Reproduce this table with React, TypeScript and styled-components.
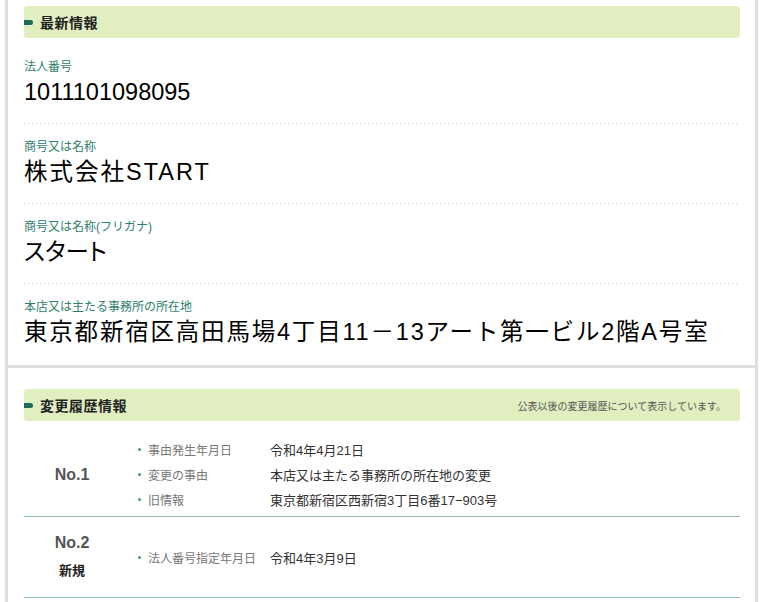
import React from "react";
import styled, { createGlobalStyle } from "styled-components";

const Global = createGlobalStyle`
  *, *::before, *::after { box-sizing: border-box; }
  html, body { margin: 0; padding: 0; background: #fff; }
  body {
    font-family: "Liberation Sans", "Noto Sans CJK JP", sans-serif;
    color: #222;
  }
`;

const Frame = styled.div`
  margin-left: 5px;
  width: 753px;
  min-height: 602px;
  background: #dedede;
  padding: 0 3px;
  display: flex;
  flex-direction: column;
  gap: 3px;
`;

const Panel = styled.section<{ $top: number; $grow?: boolean }>`
  background: #fff;
  padding: ${(p) => p.$top}px 15px 1px 16px;
  flex: ${(p) => (p.$grow ? "1 1 auto" : "none")};
`;

const SectionHeader = styled.div`
  height: 32px;
  background: #e1eebf;
  border-radius: 3px;
  display: flex;
  align-items: center;
  padding: 0 14px 0 0;
`;

const Marker = styled.span`
  width: 9px;
  height: 5px;
  border-radius: 0 3px 3px 0;
  background: #1e6a5a;
  margin-right: 7px;
`;

const HeaderTitle = styled.h2`
  margin: 0;
  font-size: 14px;
  font-weight: bold;
  letter-spacing: 0.5px;
  color: #222;
`;

const HeaderNote = styled.span`
  margin-left: auto;
  font-size: 10px;
  color: #555;
`;

const InfoList = styled.div`
  margin-top: 6px;
`;

const InfoRow = styled.div`
  padding: 15px 0 16px;
  &:not(:last-child) {
    background-image: linear-gradient(to right, #c6c6c6 1px, transparent 1px);
    background-size: 4px 1px;
    background-repeat: repeat-x;
    background-position: left bottom;
  }
`;

const InfoLabel = styled.div`
  font-size: 12px;
  line-height: 16px;
  color: #2f7e6c;
`;

const InfoValue = styled.div<{ $spacing?: number; $palt?: boolean }>`
  margin-top: 2px;
  font-size: 23.5px;
  line-height: 31px;
  color: #000;
  letter-spacing: ${(p) => p.$spacing ?? 0}px;
  font-feature-settings: ${(p) => (p.$palt ? '"palt"' : "normal")};
  white-space: nowrap;
`;

const HistoryList = styled.div`
  margin-top: 12px;
`;

const HistoryRow = styled.div`
  display: grid;
  grid-template-columns: 96px 1fr;
  align-items: center;
  min-height: 81px;
  padding: 4px 0;
  border-bottom: 1px solid #8fc2b0;
`;

const NoCell = styled.div`
  display: flex;
  flex-direction: column;
  align-items: center;
`;

const NoText = styled.div`
  font-size: 16px;
  font-weight: bold;
  line-height: 22px;
  color: #555;
`;

const Kind = styled.div`
  font-size: 13px;
  font-weight: bold;
  line-height: 22px;
  margin-top: 6px;
  color: #222;
`;

const Items = styled.ul`
  list-style: none;
  margin: 0;
  padding: 0 0 0 18px;
`;

const Item = styled.li`
  display: flex;
  align-items: center;
  height: 25px;
`;

const Bullet = styled.span`
  width: 3px;
  height: 3px;
  border-radius: 50%;
  background: #3f9c84;
  margin-right: 7px;
  flex: none;
`;

const ItemLabel = styled.span`
  width: 122px;
  flex: none;
  font-size: 12px;
  color: #777;
`;

const ItemValue = styled.span`
  font-size: 13px;
  color: #333;
`;

const info = [
  { label: "法人番号", value: "1011101098095", spacing: 0, palt: false },
  { label: "商号又は名称", value: "株式会社START", spacing: 2, palt: false },
  { label: "商号又は名称(フリガナ)", value: "スタート", spacing: 0, palt: true },
  {
    label: "本店又は主たる事務所の所在地",
    value: "東京都新宿区高田馬場4丁目11－13アート第一ビル2階A号室",
    spacing: 1.8,
    palt: false,
  },
];

const history = [
  {
    no: "No.1",
    kind: "",
    items: [
      ["事由発生年月日", "令和4年4月21日"],
      ["変更の事由", "本店又は主たる事務所の所在地の変更"],
      ["旧情報", "東京都新宿区西新宿3丁目6番17−903号"],
    ],
  },
  {
    no: "No.2",
    kind: "新規",
    items: [["法人番号指定年月日", "令和4年3月9日"]],
  },
];

export default function App() {
  return (
    <>
      <Global />
      <Frame>
        <Panel $top={6}>
          <SectionHeader>
            <Marker />
            <HeaderTitle>最新情報</HeaderTitle>
          </SectionHeader>
          <InfoList>
            {info.map((r) => (
              <InfoRow key={r.label}>
                <InfoLabel>{r.label}</InfoLabel>
                <InfoValue $spacing={r.spacing} $palt={r.palt}>
                  {r.value}
                </InfoValue>
              </InfoRow>
            ))}
          </InfoList>
        </Panel>
        <Panel $top={21} $grow>
          <SectionHeader>
            <Marker />
            <HeaderTitle>変更履歴情報</HeaderTitle>
            <HeaderNote>公表以後の変更履歴について表示しています。</HeaderNote>
          </SectionHeader>
          <HistoryList>
            {history.map((h) => (
              <HistoryRow key={h.no}>
                <NoCell>
                  <NoText>{h.no}</NoText>
                  {h.kind && <Kind>{h.kind}</Kind>}
                </NoCell>
                <Items>
                  {h.items.map(([l, v]) => (
                    <Item key={l}>
                      <Bullet />
                      <ItemLabel>{l}</ItemLabel>
                      <ItemValue>{v}</ItemValue>
                    </Item>
                  ))}
                </Items>
              </HistoryRow>
            ))}
          </HistoryList>
        </Panel>
      </Frame>
    </>
  );
}
